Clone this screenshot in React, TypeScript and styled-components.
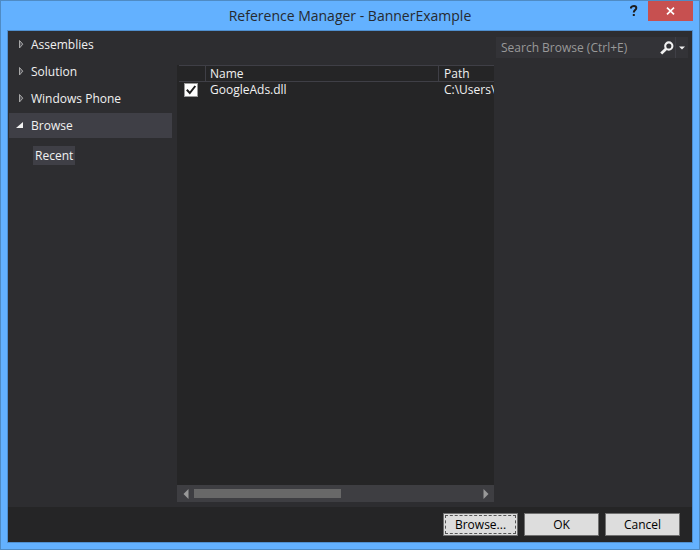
import React, { useState } from "react";
import styled, { createGlobalStyle } from "styled-components";

const GlobalStyle = createGlobalStyle`
  *, *::before, *::after { box-sizing: border-box; }
  body { margin: 0; }
  body, button, input {
    font-family: "Open Sans", "Segoe UI", sans-serif;
    font-size: 12px;
    line-height: 16px;
  }
`;

const Frame = styled.div`
  display: flex;
  flex-direction: column;
  min-height: 100vh;
  padding: 0 6px 6px;
  background: #63b1ff;
  border: 1px solid #4f8bc4;
`;

const TitleBar = styled.header`
  display: grid;
  grid-template-columns: 1fr auto 1fr;
  height: 29px;
`;

const Title = styled.h1`
  grid-column: 2;
  margin: 0;
  font-size: 14px;
  line-height: 29px;
  font-weight: 400;
  color: #262a30;
  white-space: nowrap;
`;

const WindowControls = styled.div`
  display: flex;
  justify-content: flex-end;
  align-items: flex-start;
`;

const HelpButton = styled.button`
  width: 28px;
  height: 20px;
  padding: 0;
  border: 0;
  background: transparent;
  svg { display: block; margin: 0 auto; }
`;

const CloseButton = styled.button`
  display: flex;
  align-items: center;
  justify-content: center;
  width: 45px;
  height: 20px;
  padding: 0;
  border: 0;
  background: #c75050;
`;

const Dialog = styled.div`
  display: flex;
  flex-direction: column;
  flex: 1;
  border: 1px solid #4f8fcf;
  background: #2d2d30;
  color: #f1f1f1;
`;

const Content = styled.main`
  display: grid;
  grid-template-columns: 164px minmax(0, 1fr) 198px;
  flex: 1;
`;

const Tree = styled.nav`
  display: flex;
  flex-direction: column;
  gap: 2px;
  padding: 1px 0 0 1px;
`;

const TreeItem = styled.button<{ $selected?: boolean }>`
  display: flex;
  align-items: center;
  gap: 4px;
  height: 25px;
  padding: 0 7px;
  border: 0;
  background: ${(p) => (p.$selected ? "#3f3f46" : "transparent")};
  color: #f1f1f1;
  text-align: left;
`;

const SubItem = styled.button`
  align-self: flex-start;
  height: 19px;
  margin: 6px 0 0 24px;
  padding: 0 2px;
  border: 0;
  background: #3f3f46;
  color: #f1f1f1;
`;

const ListPane = styled.section`
  display: flex;
  flex-direction: column;
  margin: 34px 0 5px 5px;
  background: #252526;
  overflow: hidden;
`;

const TableArea = styled.div`
  flex: 1;
  padding-left: 2px;
  overflow: hidden;
`;

const Table = styled.table`
  width: 100%;
  table-layout: fixed;
  border-collapse: separate;
  border-spacing: 0;
`;

const Col = styled.col<{ $width?: number }>`
  width: ${(p) => (p.$width ? `${p.$width}px` : "auto")};
`;

const HeadCell = styled.th`
  height: 17px;
  padding: 0 4px;
  border: solid #3f3f46;
  border-width: 1px 1px 1px 0;
  font-weight: 400;
  line-height: 15px;
  text-align: left;
  &:last-child { border-right: 0; padding-left: 5px; }
`;

const Cell = styled.td`
  height: 16px;
  padding: 0 4px;
  line-height: 16px;
  white-space: nowrap;
  overflow: hidden;
  &:last-child { padding-left: 5px; }
`;

const CheckLabel = styled.label`
  display: grid;
  width: 14px;
  height: 14px;
  margin-left: 1px;
  input, svg { grid-area: 1 / 1; }
  svg { pointer-events: none; visibility: hidden; }
  input:checked + svg { visibility: visible; }
`;

const Checkbox = styled.input`
  appearance: none;
  width: 14px;
  height: 14px;
  margin: 0;
  border: 1px solid #999999;
  background: #fefefe;
`;

const ScrollBar = styled.div`
  display: grid;
  grid-template-columns: 17px 1fr 17px;
  align-items: center;
  height: 17px;
  background: #3e3e42;
`;

const ScrollArrow = styled.button`
  display: flex;
  align-items: center;
  justify-content: center;
  height: 17px;
  padding: 0;
  border: 0;
  background: transparent;
`;

const ScrollThumb = styled.div`
  width: 52%;
  height: 9px;
  background: #686868;
`;

const SearchPane = styled.aside`
  padding: 6px 4px 0 2px;
`;

const SearchBox = styled.form`
  display: flex;
  height: 21px;
  background: #333337;
`;

const SearchInput = styled.input`
  flex: 1;
  min-width: 0;
  padding: 0 5px;
  border: 0;
  outline: 0;
  background: transparent;
  color: #f1f1f1;
  &::placeholder { color: #999999; opacity: 1; }
`;

const SearchButton = styled.button<{ $narrow?: boolean }>`
  display: flex;
  align-items: center;
  justify-content: center;
  width: ${(p) => (p.$narrow ? 13 : 17)}px;
  padding: 0;
  border: 0;
  border-left: ${(p) => (p.$narrow ? "1px solid #3f3f46" : "0")};
  background: transparent;
`;

const Footer = styled.footer`
  display: flex;
  justify-content: flex-end;
  gap: 6px;
  padding: 6px 12px;
  background: #252526;
`;

const DialogButton = styled.button<{ $focused?: boolean }>`
  display: flex;
  width: 75px;
  height: 23px;
  padding: 1px;
  border: 1px solid #707070;
  background: #dddddd;
  color: #000000;
  span {
    flex: 1;
    border: 1px ${(p) => (p.$focused ? "dashed #555555" : "solid transparent")};
    line-height: 17px;
  }
`;

const Closed = () => (
  <svg width="11" height="11" viewBox="0 0 11 11" aria-hidden="true">
    <path d="M3.5 1.5v7.5L6.8 5.2z" fill="#55555a" stroke="#a8a8a8" />
  </svg>
);

const Open = () => (
  <svg width="11" height="11" viewBox="0 0 11 11" aria-hidden="true">
    <path d="M7 2v6H0z" fill="#f1f1f1" />
  </svg>
);

const branches = ["Assemblies", "Solution", "Windows Phone", "Browse"];

export default function App() {
  const [checked, setChecked] = useState(true);
  const [selected, setSelected] = useState("Browse");
  return (
    <>
      <GlobalStyle />
      <Frame>
        <TitleBar>
          <Title>Reference Manager - BannerExample</Title>
          <WindowControls>
            <HelpButton aria-label="Help">
              <svg width="8" height="12" viewBox="0 0 8 12">
                <path d="M1 3.4V2.3Q2 1 4 1Q6.3 1 6.3 3Q6.3 4.2 5 5.1Q3.8 6 3.8 7.5" fill="none" stroke="#1e1e1e" strokeWidth="2" />
                <path d="M2.8 9h2v2h-2z" fill="#1e1e1e" />
              </svg>
            </HelpButton>
            <CloseButton aria-label="Close">
              <svg width="9" height="8" viewBox="0 0 9 8">
                <path d="M1 .7l7 6.6M8 .7L1 7.3" stroke="#fff" strokeWidth="1.7" />
              </svg>
            </CloseButton>
          </WindowControls>
        </TitleBar>
        <Dialog>
          <Content>
            <Tree aria-label="Reference categories">
              {branches.map((name) => (
                <TreeItem key={name} $selected={name === selected} onClick={() => setSelected(name)}>
                  {name === selected ? <Open /> : <Closed />}
                  {name}
                </TreeItem>
              ))}
              <SubItem>Recent</SubItem>
            </Tree>
            <ListPane>
              <TableArea>
                <Table>
                  <colgroup>
                    <Col $width={27} />
                    <Col $width={233} />
                    <Col />
                  </colgroup>
                  <thead>
                    <tr>
                      <HeadCell aria-label="Selected" />
                      <HeadCell>Name</HeadCell>
                      <HeadCell>Path</HeadCell>
                    </tr>
                  </thead>
                  <tbody>
                    <tr>
                      <Cell>
                        <CheckLabel>
                          <Checkbox
                            type="checkbox"
                            aria-label="GoogleAds.dll"
                            checked={checked}
                            onChange={(e) => setChecked(e.target.checked)}
                          />
                          <svg width="14" height="14" viewBox="0 0 14 14">
                            <path d="M2.8 6.8l3 3.2L11.3 3" fill="none" stroke="#1e1e1e" strokeWidth="2" />
                          </svg>
                        </CheckLabel>
                      </Cell>
                      <Cell>GoogleAds.dll</Cell>
                      <Cell>C:\Users\</Cell>
                    </tr>
                  </tbody>
                </Table>
              </TableArea>
              <ScrollBar>
                <ScrollArrow aria-label="Scroll left">
                  <svg width="6" height="10" viewBox="0 0 6 10">
                    <path d="M5.5 0v10L.5 5z" fill="#999" />
                  </svg>
                </ScrollArrow>
                <ScrollThumb />
                <ScrollArrow aria-label="Scroll right">
                  <svg width="6" height="10" viewBox="0 0 6 10">
                    <path d="M.5 0v10l5-5z" fill="#999" />
                  </svg>
                </ScrollArrow>
              </ScrollBar>
            </ListPane>
            <SearchPane>
              <SearchBox onSubmit={(e) => e.preventDefault()}>
                <SearchInput aria-label="Search Browse" placeholder="Search Browse (Ctrl+E)" />
                <SearchButton aria-label="Search">
                  <svg width="14" height="14" viewBox="0 0 14 14">
                    <circle cx="8.8" cy="5" r="3.6" fill="none" stroke="#f1f1f1" strokeWidth="2.1" />
                    <path d="M6.2 7.7L1.2 12.5" stroke="#f1f1f1" strokeWidth="2.8" />
                  </svg>
                </SearchButton>
                <SearchButton type="button" $narrow aria-label="Search options">
                  <svg width="6" height="4" viewBox="0 0 6 4">
                    <path d="M0 .5h6l-3 3z" fill="#f1f1f1" />
                  </svg>
                </SearchButton>
              </SearchBox>
            </SearchPane>
          </Content>
          <Footer>
            <DialogButton $focused><span>Browse...</span></DialogButton>
            <DialogButton><span>OK</span></DialogButton>
            <DialogButton><span>Cancel</span></DialogButton>
          </Footer>
        </Dialog>
      </Frame>
    </>
  );
}
